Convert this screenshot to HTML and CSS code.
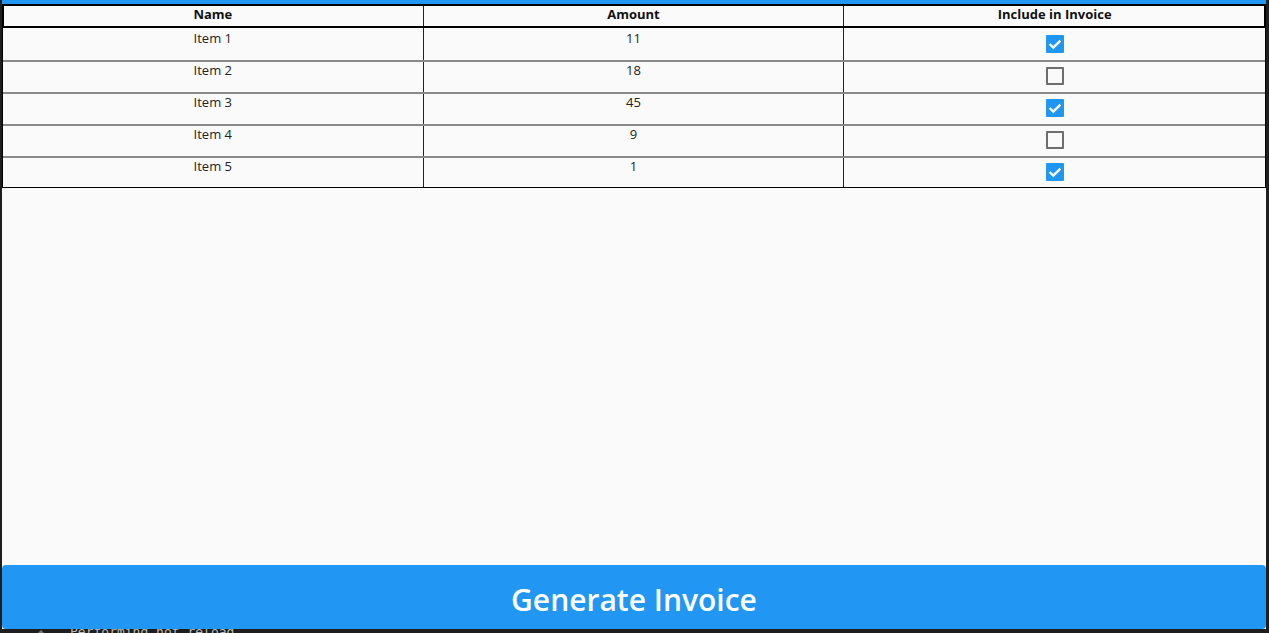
FILE: index.html
```html
<!DOCTYPE html>
<html>
<head>
<meta charset="utf-8">
<link rel="stylesheet" href="styles.css">
</head>
<body>
<div class="window">
  <div class="topbar"></div>
  <div class="table">
    <div class="row head">
      <div class="cell">Name</div>
      <div class="cell">Amount</div>
      <div class="cell">Include in Invoice</div>
    </div>
    <div class="row first">
      <div class="cell">Item 1</div>
      <div class="cell">11</div>
      <div class="cell"><span class="cb on"><svg viewBox="0 0 18 18"><path d="M3.6 9 L7.3 12.6 L14.4 5.6" /></svg></span></div>
    </div>
    <div class="row">
      <div class="cell">Item 2</div>
      <div class="cell">18</div>
      <div class="cell"><span class="cb"></span></div>
    </div>
    <div class="row">
      <div class="cell">Item 3</div>
      <div class="cell">45</div>
      <div class="cell"><span class="cb on"><svg viewBox="0 0 18 18"><path d="M3.6 9 L7.3 12.6 L14.4 5.6" /></svg></span></div>
    </div>
    <div class="row">
      <div class="cell">Item 4</div>
      <div class="cell">9</div>
      <div class="cell"><span class="cb"></span></div>
    </div>
    <div class="row last">
      <div class="cell">Item 5</div>
      <div class="cell">1</div>
      <div class="cell"><span class="cb on"><svg viewBox="0 0 18 18"><path d="M3.6 9 L7.3 12.6 L14.4 5.6" /></svg></span></div>
    </div>
  </div>
  <button class="generate">Generate Invoice</button>
</div>
<div class="console">
  <span class="chev"></span>
  <span class="log">Performing hot reload...</span>
</div>
</body>
</html>
```

FILE: styles.css
```css
html, body {
  margin: 0;
  padding: 0;
}
body {
  background: #1e1e1e;
  width: 1269px;
  height: 633px;
  overflow: hidden;
  font-family: "Open Sans", "Noto Sans", sans-serif;
}
.window {
  margin-left: 2px;
  width: 1264px;
  height: 629px;
  background: #fafafa;
  display: flex;
  flex-direction: column;
}
.topbar {
  height: 4px;
  background: #2196f3;
  flex: none;
}
.table {
  border-left: 1px solid #000;
  border-right: 1px solid #000;
  display: flex;
  flex-direction: column;
}
.row {
  display: grid;
  grid-template-columns: 1fr 1fr 1fr;
  height: 32px;
  box-sizing: border-box;
  border-top: 2px solid #8a8a8a;
  color: #222;
  font-size: 13px;
}
.row.first {
  border-top: none;
}
.row.first .cell {
  padding-top: 2px;
}
.row.last {
  border-bottom: 1px solid #000;
}
.row.head {
  height: 24px;
  border-top: 2px solid #000;
  border-bottom: 2px solid #000;
  box-shadow: inset 1px 0 #000, inset -1px 0 #000;
  font-weight: 700;
  color: #111;
}
.cell {
  text-align: center;
  line-height: 16px;
  border-right: 1px solid #222;
}
.cell:last-child {
  border-right: none;
}
.cb {
  display: block;
  width: 18px;
  height: 18px;
  box-sizing: border-box;
  margin: 5px auto 0;
  border: 2px solid #6e6e6e;
  border-radius: 1px;
}
.cb.on {
  background: #2196f3;
  border: none;
}
.cb svg {
  display: block;
  width: 18px;
  height: 18px;
}
.cb path {
  fill: none;
  stroke: #fff;
  stroke-width: 2.4;
}
.generate {
  margin-top: auto;
  height: 64px;
  border: none;
  border-radius: 4px;
  background: #2196f3;
  color: #fff;
  font-family: "Open Sans", "Noto Sans", sans-serif;
  font-weight: 600;
  font-size: 30px;
  padding: 4px 0 0;
  cursor: pointer;
}
.console {
  height: 4px;
  overflow: hidden;
  position: relative;
  color: #b8b8b8;
  font-family: "DejaVu Sans Mono", monospace;
  font-size: 13px;
  line-height: 16px;
}
.log {
  display: block;
  margin: -5px 0 0 70px;
}
.chev {
  position: absolute;
  left: 37px;
  top: 1px;
  width: 0;
  height: 0;
  border-left: 4px solid transparent;
  border-right: 4px solid transparent;
  border-bottom: 4px solid #777;
}
```
